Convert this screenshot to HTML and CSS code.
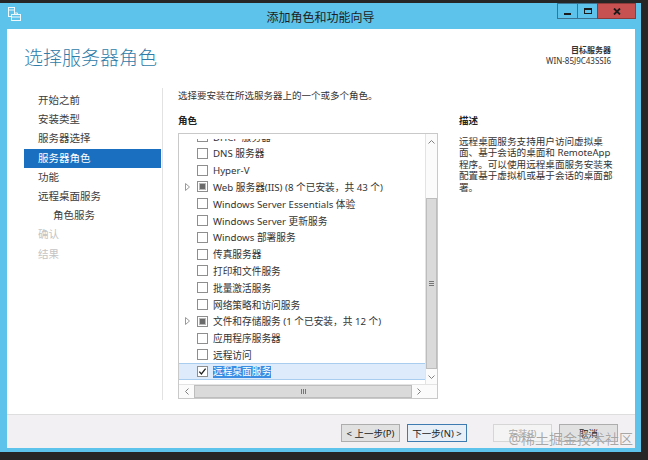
FILE: index.html
```html
<!DOCTYPE html>
<html lang="zh-CN">
<head>
    <meta charset="UTF-8">
    <title>添加角色和功能向导</title>
    <link rel="stylesheet" href="styles.css">
</head>
<body>
    <div class="window">
        <!-- Barra de título -->
        <div class="titlebar">
            <svg class="app-icon" width="13" height="14" viewBox="0 0 13 14">
                <rect x="0.5" y="0.5" width="6" height="9" fill="none" stroke="#eef8fd"/>
                <line x1="0.5" y1="3" x2="6.5" y2="3" stroke="#eef8fd"/>
                <rect x="3.5" y="7.5" width="9" height="6" fill="#5dc3ea" stroke="#eef8fd"/>
                <path d="M6.5 7.5 V6 H9.5 V7.5" fill="none" stroke="#eef8fd"/>
                <line x1="3.5" y1="10" x2="12.5" y2="10" stroke="#eef8fd"/>
            </svg>
            <span class="title">添加角色和功能向导</span>
            <div class="controls">
                <div class="ctl"><span class="min-bar"></span></div>
                <div class="ctl"><span class="max-box"></span></div>
                <div class="ctl close">
                    <svg width="8" height="7" viewBox="0 0 8 7"><path d="M1 0.5 L7 6.5 M7 0.5 L1 6.5" stroke="#1b1b1b" stroke-width="1.8"/></svg>
                </div>
            </div>
        </div>

        <div class="client">
            <!-- Encabezado -->
            <div class="header">
                <h1>选择服务器角色</h1>
                <div class="target">
                    <div class="target-label">目标服务器</div>
                    <div>WIN-85J9C43SSI6</div>
                </div>
            </div>

            <div class="main">
                <!-- Pasos del asistente -->
                <ul class="steps">
                    <li>开始之前</li>
                    <li>安装类型</li>
                    <li>服务器选择</li>
                    <li class="current">服务器角色</li>
                    <li>功能</li>
                    <li>远程桌面服务</li>
                    <li class="sub">角色服务</li>
                    <li class="disabled">确认</li>
                    <li class="disabled">结果</li>
                </ul>

                <div class="content">
                    <p class="intro">选择要安装在所选服务器上的一个或多个角色。</p>
                    <div class="columns">
                        <div class="roles">
                            <div class="label">角色</div>
                            <div class="listbox">
                                <div class="list-view">
                                    <div class="list">
                                        <div class="rows">
                                            <div class="row"><span class="expander"></span><span class="cb"></span><span class="text">DHCP 服务器</span></div>
                                            <div class="row"><span class="expander"></span><span class="cb"></span><span class="text">DNS 服务器</span></div>
                                            <div class="row"><span class="expander"></span><span class="cb"></span><span class="text">Hyper-V</span></div>
                                            <div class="row">
                                                <span class="expander"><svg width="5" height="8" viewBox="0 0 5 8"><path d="M0.5 0.5 L4.5 4 L0.5 7.5 Z" fill="none" stroke="#9a9a9a"/></svg></span>
                                                <span class="cb partial"></span><span class="text">Web 服务器(IIS) (8 个已安装，共 43 个)</span>
                                            </div>
                                            <div class="row"><span class="expander"></span><span class="cb"></span><span class="text">Windows Server Essentials 体验</span></div>
                                            <div class="row"><span class="expander"></span><span class="cb"></span><span class="text">Windows Server 更新服务</span></div>
                                            <div class="row"><span class="expander"></span><span class="cb"></span><span class="text">Windows 部署服务</span></div>
                                            <div class="row"><span class="expander"></span><span class="cb"></span><span class="text">传真服务器</span></div>
                                            <div class="row"><span class="expander"></span><span class="cb"></span><span class="text">打印和文件服务</span></div>
                                            <div class="row"><span class="expander"></span><span class="cb"></span><span class="text">批量激活服务</span></div>
                                            <div class="row"><span class="expander"></span><span class="cb"></span><span class="text">网络策略和访问服务</span></div>
                                            <div class="row">
                                                <span class="expander"><svg width="5" height="8" viewBox="0 0 5 8"><path d="M0.5 0.5 L4.5 4 L0.5 7.5 Z" fill="none" stroke="#9a9a9a"/></svg></span>
                                                <span class="cb partial"></span><span class="text">文件和存储服务 (1 个已安装，共 12 个)</span>
                                            </div>
                                            <div class="row"><span class="expander"></span><span class="cb"></span><span class="text">应用程序服务器</span></div>
                                            <div class="row"><span class="expander"></span><span class="cb"></span><span class="text">远程访问</span></div>
                                            <div class="row selected">
                                                <span class="expander"></span>
                                                <span class="cb"><svg width="9" height="9" viewBox="0 0 9 9"><path d="M1.3 4.6 L3.4 7 L7.6 1.6" fill="none" stroke="#1f1f1f" stroke-width="1.3"/></svg></span>
                                                <span class="text">远程桌面服务</span>
                                            </div>
                                        </div>
                                    </div>
                                    <!-- Barra de desplazamiento vertical -->
                                    <div class="vscroll">
                                        <div class="arrow-v"><svg width="7" height="4" viewBox="0 0 7 4"><path d="M0.5 3.5 L3.5 0.5 L6.5 3.5" fill="none" stroke="#808080"/></svg></div>
                                        <div class="track-v">
                                            <div class="thumb-v"><span class="grip-v"></span></div>
                                        </div>
                                        <div class="arrow-v"><svg width="7" height="4" viewBox="0 0 7 4"><path d="M0.5 0.5 L3.5 3.5 L6.5 0.5" fill="none" stroke="#808080"/></svg></div>
                                    </div>
                                </div>
                                <!-- Barra de desplazamiento horizontal -->
                                <div class="hscroll">
                                    <div class="arrow-h left"><svg width="4" height="7" viewBox="0 0 4 7"><path d="M3.5 0.5 L0.5 3.5 L3.5 6.5" fill="none" stroke="#808080"/></svg></div>
                                    <div class="thumb-h"><span class="grip-h"></span></div>
                                    <div class="arrow-h"><svg width="4" height="7" viewBox="0 0 4 7"><path d="M0.5 0.5 L3.5 3.5 L0.5 6.5" fill="none" stroke="#808080"/></svg></div>
                                    <div class="corner"></div>
                                </div>
                            </div>
                        </div>

                        <div class="desc">
                            <div class="label">描述</div>
                            <p>远程桌面服务支持用户访问虚拟桌<br>面、基于会话的桌面和 RemoteApp<br>程序。可以使用远程桌面服务安装来<br>配置基于虚拟机或基于会话的桌面部<br>署。</p>
                        </div>
                    </div>
                </div>
            </div>

            <!-- Botones -->
            <div class="footer">
                <button class="btn">&lt; 上一步(P)</button>
                <button class="btn default">下一步(N) &gt;</button>
                <button class="btn disabled install">安装(I)</button>
                <button class="btn">取消</button>
            </div>
        </div>
    </div>

    <div class="watermark">@稀土掘金技术社区</div>
</body>
</html>
```

FILE: styles.css
```css
/* Estilos generales */
body {
    margin: 0;
    width: 648px;
    height: 460px;
    overflow: hidden;
    position: relative;
    background-color: #262626;
    font-family: "Noto Sans", "Noto Sans CJK SC", sans-serif;
    color: #333;
}

/* Ventana */
.window {
    margin-top: 3px;
    width: 641px;
    height: 449px;
    box-sizing: border-box;
    padding: 0 6px 4px 7px;
    background-color: #5dc3ea;
    display: flex;
    flex-direction: column;
}

/* Barra de título */
.titlebar {
    height: 26px;
    margin: 0 -6px 0 -7px;
    display: grid;
    grid-template-columns: 1fr auto 1fr;
}

.app-icon {
    margin: 4px 0 0 8px;
}

.title {
    padding-top: 3px;
    line-height: 24px;
    font-size: 12px;
    color: #1e1e1e;
}

.controls {
    justify-self: end;
    align-self: start;
    margin-right: 5px;
    display: flex;
}

.ctl {
    width: 21px;
    height: 16px;
    box-sizing: border-box;
    border: 1px solid #3b7391;
    margin-left: -1px;
    display: flex;
    align-items: center;
    justify-content: center;
}

.ctl.close {
    width: 39px;
    background-color: #c75050;
    border-color: #8d3a3a;
}

.min-bar {
    width: 7px;
    height: 2px;
    margin-top: 5px;
    background-color: #1b1b1b;
}

.max-box {
    width: 8px;
    height: 6px;
    box-sizing: border-box;
    border: 1px solid #1b1b1b;
    border-top-width: 2px;
}

/* Área cliente */
.client {
    flex: 1;
    background-color: #fff;
    display: flex;
    flex-direction: column;
}

.header {
    height: 59px;
    box-sizing: border-box;
    padding: 0 24px 0 17px;
    display: flex;
    justify-content: space-between;
}

.header h1 {
    margin: 17px 0 0;
    font-size: 19px;
    line-height: 24px;
    font-weight: 300;
    color: #2f7ca8;
}

.target {
    margin-top: 15px;
    text-align: right;
    font-size: 8px;
    line-height: 11px;
    color: #333;
}

.target-label {
    font-weight: bold;
}

.main {
    height: 312px;
    padding-left: 17px;
    display: flex;
}

/* Pasos */
.steps {
    width: 137px;
    list-style: none;
    margin: 0;
    padding: 3px 0 0;
}

.steps li {
    height: 19.2px;
    line-height: 19.2px;
    padding-left: 14px;
    font-size: 10.5px;
    color: #3c3c3c;
}

.steps li.sub {
    padding-left: 29px;
}

.steps li.current {
    background-color: #1a6fc0;
    color: #fff;
}

.steps li.disabled {
    color: #c4c4c4;
}

/* Contenido */
.content {
    flex: 1;
    margin-left: 1px;
    border-left: 1px solid #e2e2e2;
    padding: 1px 0 0 15px;
}

.intro {
    margin: 0;
    font-size: 9.5px;
    line-height: 14px;
    color: #333;
}

.columns {
    margin-top: 11px;
    display: flex;
}

.roles {
    width: 260px;
}

.label {
    font-size: 9.5px;
    line-height: 14px;
    font-weight: bold;
    color: #222;
}

.listbox {
    margin-top: 5px;
    height: 266px;
    box-sizing: border-box;
    border: 1px solid #c9c9c9;
    display: flex;
    flex-direction: column;
}

.list-view {
    height: 251px;
    display: flex;
}

.list {
    flex: 1;
    margin-top: 5px;
    overflow: hidden;
}

.rows {
    margin-top: -10.8px;
}

.row {
    height: 16.8px;
    box-sizing: border-box;
    display: flex;
    align-items: center;
    white-space: nowrap;
    font-size: 9.7px;
    color: #333;
}

.row.selected {
    background-color: #deebfb;
    border-top: 1px solid #a9cdef;
    border-bottom: 1px solid #a9cdef;
}

.row.selected .text {
    background-color: #3a8de3;
    color: #fff;
    line-height: 12px;
}

.expander {
    width: 18px;
    display: flex;
    justify-content: center;
    padding-right: 2px;
    box-sizing: border-box;
}

.cb {
    width: 11px;
    height: 11px;
    margin-right: 5px;
    box-sizing: border-box;
    border: 1px solid #8e8e8e;
    background-color: #fff;
    display: flex;
    align-items: center;
    justify-content: center;
}

.cb.partial::after {
    content: "";
    width: 5px;
    height: 5px;
    background-color: #6a6a6a;
    box-shadow: 0 0 0 1px #b8b8b8;
}

/* Barras de desplazamiento */
.vscroll {
    width: 12px;
    box-sizing: border-box;
    border-left: 1px solid #e3e3e3;
    background-color: #fbfbfb;
    display: flex;
    flex-direction: column;
}

.arrow-v {
    height: 15px;
    display: flex;
    align-items: center;
    justify-content: center;
}

.track-v {
    flex: 1;
    display: flex;
    flex-direction: column;
}

.thumb-v {
    margin-top: auto;
    height: 171px;
    box-sizing: border-box;
    border: 1px solid #bdbdbd;
    background-color: #dadada;
    display: flex;
    align-items: center;
    justify-content: center;
}

.grip-v {
    width: 5px;
    height: 5px;
    border-top: 1px solid #777;
    border-bottom: 1px solid #777;
    background: linear-gradient(#777, #777) center / 5px 1px no-repeat;
    box-sizing: border-box;
}

.hscroll {
    height: 13px;
    border-top: 1px solid #e3e3e3;
    background-color: #fbfbfb;
    display: flex;
}

.arrow-h {
    width: 13px;
    display: flex;
    align-items: center;
    justify-content: center;
}

.arrow-h.left {
    width: 15px;
}

.thumb-h {
    flex: 1;
    box-sizing: border-box;
    border: 1px solid #bdbdbd;
    background-color: #dadada;
    display: flex;
    align-items: center;
    justify-content: center;
}

.grip-h {
    width: 5px;
    height: 5px;
    border-left: 1px solid #777;
    border-right: 1px solid #777;
    background: linear-gradient(#777, #777) center / 1px 5px no-repeat;
    box-sizing: border-box;
}

.corner {
    width: 12px;
}

/* Descripción */
.desc {
    margin-left: 21px;
    width: 165px;
}

.desc p {
    margin: 7.5px 0 0;
    font-size: 9.6px;
    line-height: 11.5px;
    color: #333;
    white-space: nowrap;
}

/* Pie con botones */
.footer {
    margin-top: 14px;
    height: 34px;
    box-sizing: border-box;
    border-top: 1px solid #dedede;
    background-color: #f2f0f2;
    padding: 9px 17px 0 0;
    display: flex;
    justify-content: flex-end;
    align-items: flex-start;
    gap: 7px;
}

.btn {
    width: 59px;
    height: 18px;
    padding: 0;
    box-sizing: border-box;
    border: 1px solid #adadad;
    background-color: #e1e1e1;
    font-family: inherit;
    font-size: 9.5px;
    color: #222;
}

.btn.default {
    width: 60px;
    border-color: #3d7bb0;
    background-color: #e8eff7;
}

.btn.install {
    margin-left: 19px;
}

.btn.disabled {
    border-color: #d6d6d6;
    background-color: #f4f4f4;
    color: #a8a8a8;
}

/* Marca de agua */
.watermark {
    position: absolute;
    right: 15px;
    bottom: 12px;
    font-size: 14px;
    line-height: 18px;
    color: rgba(140, 140, 140, 0.75);
    text-shadow: 0 0 1px rgba(255, 255, 255, 0.8);
}
```
